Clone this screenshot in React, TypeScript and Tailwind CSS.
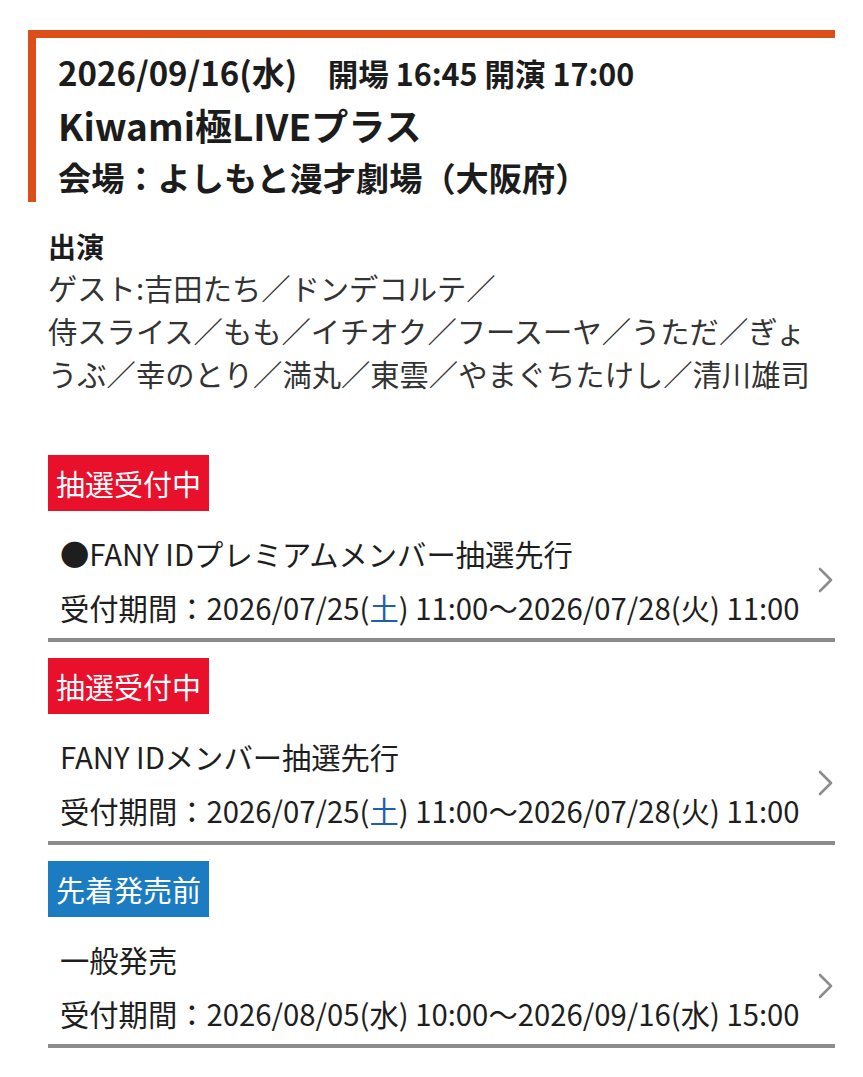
import React from "react";

type Sale = {
  status: string;
  tone: "red" | "blue";
  title: string;
  period: React.ReactNode;
};

const sales: Sale[] = [
  {
    status: "抽選受付中",
    tone: "red",
    title: "●FANY IDプレミアムメンバー抽選先行",
    period: (
      <>
        受付期間：2026/07/25(<span className="text-[#1f5fae]">土</span>) 11:00〜2026/07/28(火) 11:00
      </>
    ),
  },
  {
    status: "抽選受付中",
    tone: "red",
    title: "FANY IDメンバー抽選先行",
    period: (
      <>
        受付期間：2026/07/25(<span className="text-[#1f5fae]">土</span>) 11:00〜2026/07/28(火) 11:00
      </>
    ),
  },
  {
    status: "先着発売前",
    tone: "blue",
    title: "一般発売",
    period: <>受付期間：2026/08/05(水) 10:00〜2026/09/16(水) 15:00</>,
  },
];

function Chevron() {
  return (
    <svg width="16" height="26" viewBox="0 0 16 26" className="shrink-0">
      <polyline
        points="2,2 13,13 2,24"
        fill="none"
        stroke="#8d8d8d"
        strokeWidth="2.6"
        strokeLinecap="round"
        strokeLinejoin="round"
      />
    </svg>
  );
}

function SaleBlock({ sale }: { sale: Sale }) {
  return (
    <div className="mb-[16px]">
      <div
        className={
          "inline-block px-[8px] py-[6px] text-[29px] leading-[44px] text-white " +
          (sale.tone === "red" ? "bg-[#e8102b]" : "bg-[#1c7cc1]")
        }
      >
        {sale.status}
      </div>
      <div className="flex items-center border-b-[4px] border-[#8c8c8c] pl-[12px] pr-[1px] pt-[20px] pb-[9px]">
        <div className="flex-1 text-[29.3px] leading-[44px] text-[#1e1e1e]">
          <div>{sale.title}</div>
          <div className="mt-[10px] whitespace-nowrap">{sale.period}</div>
        </div>
        <Chevron />
      </div>
    </div>
  );
}

export default function App() {
  return (
    <div
      className="min-h-[1077px] bg-white px-[28px] pt-[30px]"
      style={{ fontFamily: '"Noto Sans CJK JP", "Noto Sans", sans-serif' }}
    >
      <div className="border-l-[8px] border-t-[8px] border-[#dc4f1b] pl-[22px] pt-[9px] font-bold text-[#1c1c1c]">
        <div className="text-[33px] leading-[51px]">
          2026/09/16(水)<span className="text-[30.5px]">　開場 16:45 開演 17:00</span>
        </div>
        <div className="text-[37px] leading-[52px]">Kiwami極LIVEプラス</div>
        <div className="text-[33.2px] leading-[51px]">会場：よしもと漫才劇場（大阪府）</div>
      </div>

      <div className="ml-[20px]">
        <div className="mt-[25px] text-[29.3px] leading-[43px] text-[#333333]">
          <div className="text-[28px] leading-[39px] font-bold text-[#1c1c1c]">出演</div>
          <div>
            ゲスト:吉田たち／ドンデコルテ／
            <br />
            侍スライス／もも／イチオク／フースーヤ／うただ／ぎょ
            <br />
            うぶ／幸のとり／満丸／東雲／やまぐちたけし／清川雄司
          </div>
        </div>

        <div className="mt-[60px]">
          {sales.map((s, i) => (
            <SaleBlock key={i} sale={s} />
          ))}
        </div>
      </div>
    </div>
  );
}
